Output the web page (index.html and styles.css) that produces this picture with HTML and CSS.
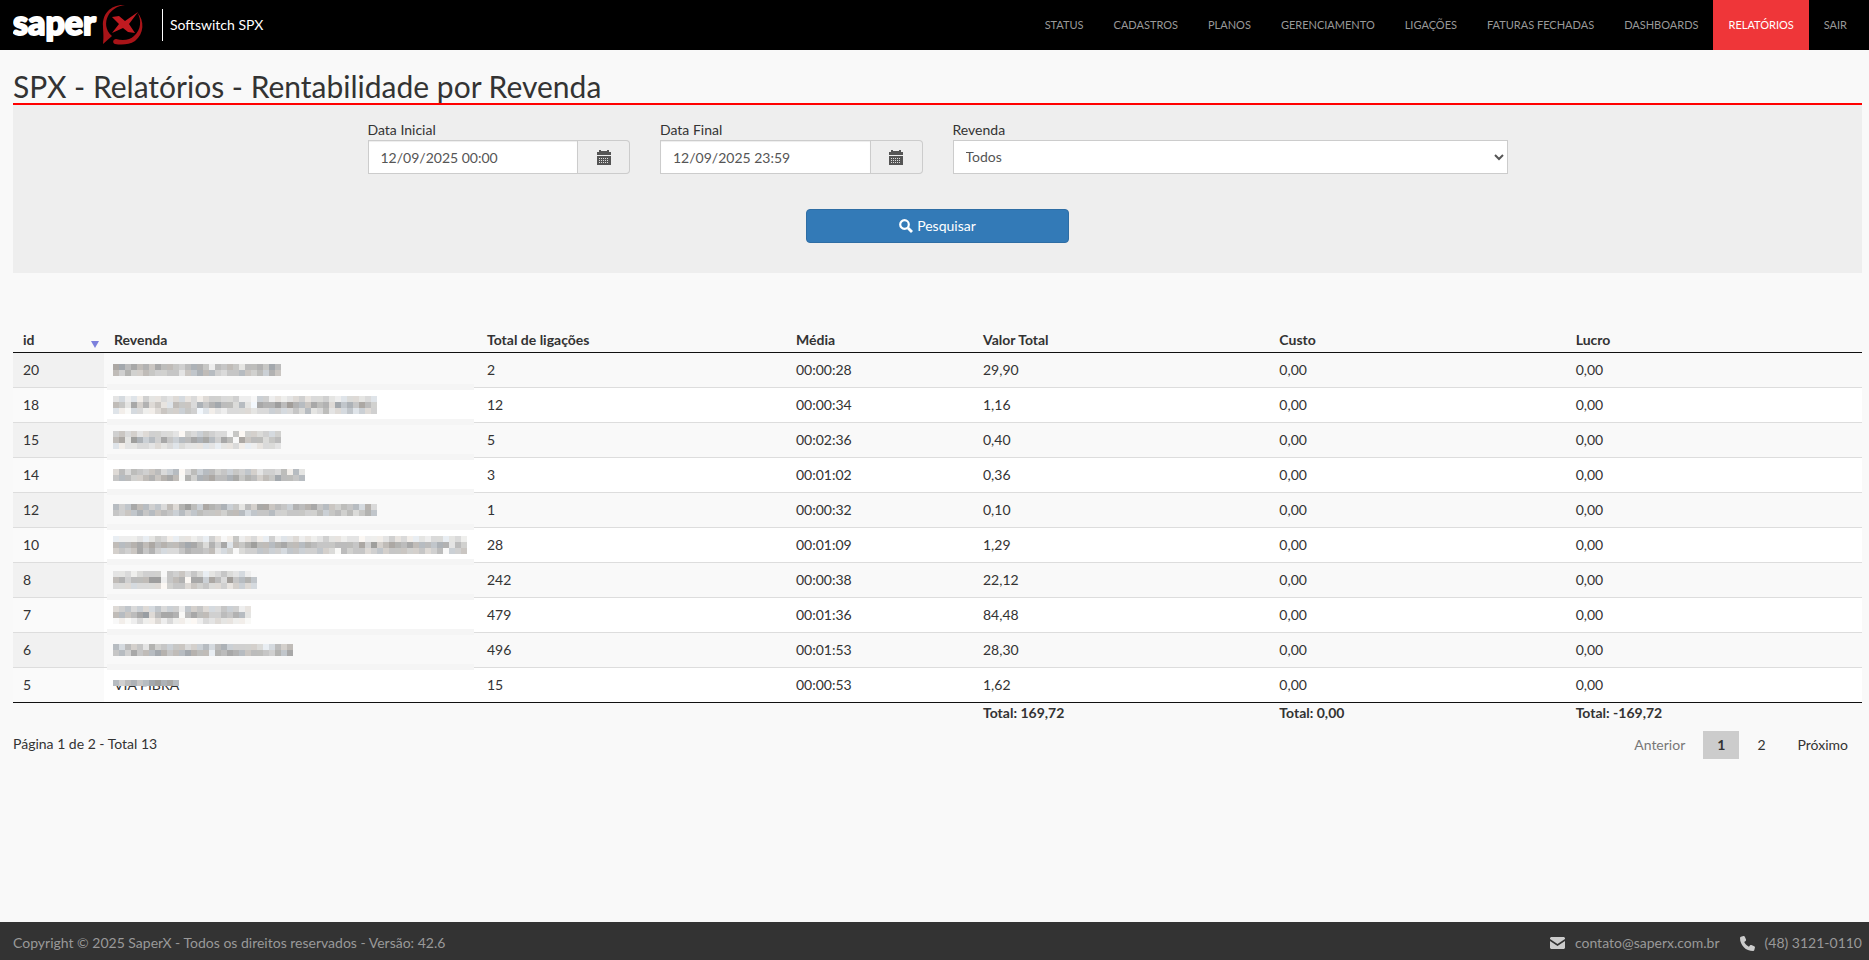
FILE: index.html
```
<!DOCTYPE html>
<html lang="pt-br">
<head>
  <meta charset="UTF-8">
  <meta name="viewport" content="width=device-width, initial-scale=1.0">
  <title>SPX - Relatórios - Rentabilidade por Revenda</title>
  <link rel="stylesheet" href="styles.css">
</head>
<body>

  <header class="topbar">
    <a class="brand" href="#">
      <svg class="logo" width="132" height="50" viewBox="0 0 132 50" role="img" aria-label="saper X">
        <text class="logo-text" x="0" y="35">saper</text>
        <path fill="#a81418" d="M112 5C98 4 89 14 90 26c0 5 1 10 0 18l9-8c-7-6-7-14-4-20 3-6 9-10 17-11z"/>
        <path fill="#a81418" d="M124 12c8 9 7 22-2 29-6 4-14 4-20 3-3-1-2-5 1-5 7 2 14 1 18-3 7-6 8-16 3-24z"/>
        <path fill="#c01a20" d="M99 17l7-1 6 5 13-9-9 12 6 9-7-1-5-4-11 5 7-9z"/>
      </svg>
      <span class="brand-name">Softswitch SPX</span>
    </a>
    <nav class="menu">
      <a href="#">STATUS</a>
      <a href="#">CADASTROS</a>
      <a href="#">PLANOS</a>
      <a href="#">GERENCIAMENTO</a>
      <a href="#">LIGAÇÕES</a>
      <a href="#">FATURAS FECHADAS</a>
      <a href="#">DASHBOARDS</a>
      <a href="#" class="active">RELATÓRIOS</a>
      <a href="#">SAIR</a>
    </nav>
  </header>

  <main>
    <h1>SPX - Relatórios - Rentabilidade por Revenda</h1>

    <form class="filter">
      <div class="fields">
        <div>
          <label for="data-inicial">Data Inicial</label>
          <div class="input-group">
            <input type="text" id="data-inicial" value="12/09/2025 00:00">
            <button type="button" class="addon" aria-label="Abrir calendário">
              <svg width="14" height="15" viewBox="0 0 14 15"><path fill="#555" d="M0 2h2V0h2v1h6V0h2v2h2v3H0zM0 6h14v9H0z"/><path stroke="#ddd" stroke-dasharray="1 1" d="M2 8.500h10M2 10.500h10M2 12.500h10"/></svg>
            </button>
          </div>
        </div>
        <div>
          <label for="data-final">Data Final</label>
          <div class="input-group">
            <input type="text" id="data-final" value="12/09/2025 23:59">
            <button type="button" class="addon" aria-label="Abrir calendário">
              <svg width="14" height="15" viewBox="0 0 14 15"><path fill="#555" d="M0 2h2V0h2v1h6V0h2v2h2v3H0zM0 6h14v9H0z"/><path stroke="#ddd" stroke-dasharray="1 1" d="M2 8.500h10M2 10.500h10M2 12.500h10"/></svg>
            </button>
          </div>
        </div>
        <div class="wide">
          <label for="revenda">Revenda</label>
          <select id="revenda">
            <option>Todos</option>
          </select>
        </div>
      </div>
      <button type="submit" class="btn-search">
        <svg width="14" height="14" viewBox="0 0 14 14" fill="none" stroke="#fff"><circle cx="5.500" cy="5.500" r="4.300" stroke-width="2.200"/><path d="M9 9l4 4" stroke-width="2.800"/></svg>
        Pesquisar
      </button>
    </form>

    <table>
      <colgroup>
        <col class="col-id"><col class="col-revenda"><col class="col-total"><col class="col-media"><col><col><col>
      </colgroup>
      <thead>
        <tr>
          <th class="sorted">id</th>
          <th>Revenda</th>
          <th>Total de ligações</th>
          <th>Média</th>
          <th>Valor Total</th>
          <th>Custo</th>
          <th>Lucro</th>
        </tr>
      </thead>
      <tbody id="rows"></tbody>
      <tfoot>
        <tr>
          <td></td>
          <td></td>
          <td></td>
          <td></td>
          <th>Total: 169,72</th>
          <th>Total: 0,00</th>
          <th>Total: -169,72</th>
        </tr>
      </tfoot>
    </table>

    <div class="table-footer">
      <span>Página 1 de 2 - Total 13</span>
      <nav class="pages">
        <a href="#" class="disabled">Anterior</a>
        <a href="#" class="current">1</a>
        <a href="#">2</a>
        <a href="#">Próximo</a>
      </nav>
    </div>
  </main>

  <footer>
    <span>Copyright © 2025 SaperX - Todos os direitos reservados - Versão: 42.6</span>
    <div class="contact">
      <a href="#">
        <svg width="15" height="12" viewBox="0 0 15 12" fill="#ccc"><path d="M1 0h13l1 1v1L7.500 7 0 2V1z"/><path d="M0 4l7.500 5L15 4v7l-1 1H1l-1-1z"/></svg>
        contato@saperx.com.br
      </a>
      <a href="#">
        <svg width="15" height="15" viewBox="0 0 512 512" fill="#ccc"><path d="M165 25c-8-19-28-29-48-23L29 26C12 31 0 47 0 64c0 247 201 448 448 448 18 0 33-12 38-29l24-88c5-20-5-40-24-48l-96-40c-16-7-35-2-46 12l-40 49c-71-33-127-90-160-160l49-40c13-11 18-30 12-46z"/></svg>
        (48) 3121-0110
      </a>
    </div>
  </footer>

  <script>
    // [id, nome oculto, ligações, média, valor]
    const rows = [
      [20, ["1131324133453224834347332413", "3525534554474423356443453524"], "2", "00:00:28", "29,90"],
      [18, ["76878577676676865566588955878765766578766767", "34715264773446242133637912203023413261424135", "78966886455545978786666766556646376376647565"], "12", "00:00:34", "1,16"],
      [15, ["5465765566795654566949556565", "3170253514533121351391433643", "7877667676767777787768887667"], "5", "00:02:36", "0,40"],
      [14, ["63634543653963533545454575563837", "43355324213925221332142353413343"], "3", "00:01:02", "0,36"],
      [12, ["35413354636203512325473511434523214345343626", "45442434345354344453336444355444553543536424"], "1", "00:00:32", "0,10"],
      [10, ["88887875688778785798487688587768787577877988875768878668768", "33321313233211362517342033321333234443334150531231333422735", "54541425666423343765965544556445554569354465454445546539554"], "28", "00:01:09", "1,29"],
      [8, ["776865559454646876467689", "325333008432911513604324", "666666669544645466575566"], "242", "00:00:38", "22,12"],
      [7, ["65465664655845466645587", "33431063112931335534237", "98986886868899867677889"], "479", "00:01:36", "84,48"],
      [6, ["363547254544655363255555686353", "435143312433123382312343345241"], "496", "00:01:53", "28,30"],
      [5, ["35324310213"], "15", "00:00:53", "1,62"]
    ];

    const tbody = document.getElementById("rows");
    const size = 6;
    const tints = [[0, 0, 0], [4, 0, -4], [0, 0, 0], [-5, 0, 5], [1, 1, -1]];

    rows.forEach(([id, mask, total, media, valor]) => {
      const tr = document.createElement("tr");
      const name = id === 5 ? "VIA FIBRA" : "";
      tr.innerHTML = `<td>${id}</td><td class="name">${name}<canvas></canvas></td><td>${total}</td><td>${media}</td><td>${valor}</td><td>0,00</td><td>0,00</td>`;
      tbody.appendChild(tr);

      const canvas = tr.querySelector("canvas");
      canvas.width = mask[0].length * size;
      canvas.height = mask.length * size;
      const ctx = canvas.getContext("2d");
      mask.forEach((line, y) => {
        [...line].forEach((c, x) => {
          const g = 158 + Number(c) * 10;
          const t = tints[(x * 7 + y * 3 + Number(c)) % 5];
          ctx.fillStyle = `rgb(${g + t[0]}, ${g + t[1]}, ${g + t[2]})`;
          ctx.fillRect(x * size, y * size, size, size);
        });
      });
    });
  </script>

</body>
</html>
```

FILE: styles.css
```
* {
  box-sizing: border-box;
}
body {
  margin: 0;
  min-height: 100vh;
  display: flex;
  flex-direction: column;
  font-family: Lato, sans-serif;
  font-size: 14px;
  line-height: 20px;
  color: #333;
  background: #f9f9f9;
}
a {
  color: inherit;
  text-decoration: none;
}
input, select, button {
  font: inherit;
}

/* topo */
.topbar {
  display: flex;
  justify-content: space-between;
  height: 50px;
  padding: 0 7px 0 13px;
  background: #000;
}
.brand {
  display: flex;
  align-items: center;
  gap: 17px;
  color: #fff;
}
.logo-text {
  font-family: Lato, sans-serif;
  font-size: 34px;
  font-weight: 900;
  fill: #fff;
  stroke: #fff;
  stroke-width: 2px;
  stroke-linejoin: round;
}
.brand-name {
  padding: 6px 0 6px 7px;
  border-left: 1px solid #fff;
}
.menu {
  display: flex;
}
.menu a {
  padding: 15px;
  font-size: 11px;
  color: #999;
}
.menu .active {
  background: #ef3639;
  color: #fff;
}

/* conteudo */
main {
  flex: 1;
  padding: 20px 7px 20px 13px;
}
h1 {
  margin: 0;
  font-size: 30px;
  font-weight: 400;
  line-height: 33px;
}
.filter {
  position: relative;
  padding: 15px 0 30px;
  border-top: 2px solid #f00;
  background: #eee;
}
.fields {
  display: grid;
  grid-template-columns: repeat(4, 1fr);
  gap: 30px;
  max-width: 1170px;
  margin: 0 auto 35px;
  padding: 0 15px;
}
.fields .wide {
  grid-column: span 2;
}
.fields label {
  display: block;
}
.input-group {
  display: flex;
}
.input-group input, select {
  width: 100%;
  height: 34px;
  padding: 6px 12px;
  border: 1px solid #ccc;
  border-radius: 0;
  background: #fff;
  color: #555;
}
.input-group input {
  flex: 1;
  min-width: 0;
  box-shadow: inset 0 1px 1px rgba(0, 0, 0, 0.075);
}
select {
  padding: 5px 8px 7px;
}
.addon {
  width: 52px;
  padding: 0;
  border: 1px solid #ccc;
  border-left: none;
  border-radius: 0 4px 4px 0;
  background: #eee;
}
.addon svg {
  display: block;
  margin: 0 auto;
}
.btn-search {
  display: flex;
  align-items: center;
  justify-content: center;
  gap: 4px;
  width: 263px;
  height: 34px;
  margin: 0 auto;
  border: 1px solid #2e6da4;
  border-radius: 4px;
  background: #337ab7;
  color: #fff;
}

/* tabela */
table {
  width: 100%;
  margin-top: 47px;
  table-layout: fixed;
  border-collapse: separate;
  border-spacing: 0;
}
.col-id { width: 91px; }
.col-revenda { width: 373px; }
.col-total { width: 309px; }
.col-media { width: 187px; }
th {
  padding: 10px 10px 2px;
  text-align: left;
  font-weight: 700;
}
thead th {
  border-bottom: 1px solid #111;
}
.sorted {
  position: relative;
}
.sorted::after {
  content: "";
  position: absolute;
  right: 5px;
  bottom: 4px;
  border: 4px solid transparent;
  border-top: 7px solid #7c80dc;
  border-bottom: none;
}
tbody td {
  height: 35px;
  padding: 7px 10px;
  border-bottom: 1px solid #ddd;
  background: #fff;
}
tbody tr:nth-child(odd) td {
  background: #f9f9f9;
}
tbody tr td:first-child {
  background: #fafafa;
}
tbody tr:nth-child(odd) td:first-child {
  background: #f1f1f1;
}
tbody tr:last-child td {
  border-bottom-color: #111;
}
.name {
  position: relative;
}
.name canvas {
  display: block;
  margin: 0 auto 0 -1px;
}
tbody tr:not(:last-child) .name::after {
  content: "";
  position: absolute;
  z-index: 1;
  left: 3px;
  right: 3px;
  bottom: -3px;
  height: 6px;
  background: #f5f5f5;
}
tbody tr:last-child canvas {
  position: absolute;
  top: 12px;
  left: 10px;
}
tfoot th, tfoot td {
  padding: 0 10px;
}
.table-footer {
  display: flex;
  justify-content: space-between;
  align-items: flex-start;
  padding-top: 8px;
}
.table-footer span {
  padding: 3px 0;
}
.pages {
  display: flex;
  gap: 4px;
}
.pages a {
  padding: 4px 14px;
}
.pages .disabled {
  color: #777;
}
.pages .current {
  background: #ccc;
  font-weight: 700;
}

/* rodape */
footer {
  display: flex;
  justify-content: space-between;
  align-items: center;
  height: 38px;
  padding: 4px 7px 0 13px;
  background: #333;
  color: #999;
}
.contact {
  display: flex;
  gap: 20px;
}
.contact a {
  display: flex;
  align-items: center;
  gap: 10px;
}
```
